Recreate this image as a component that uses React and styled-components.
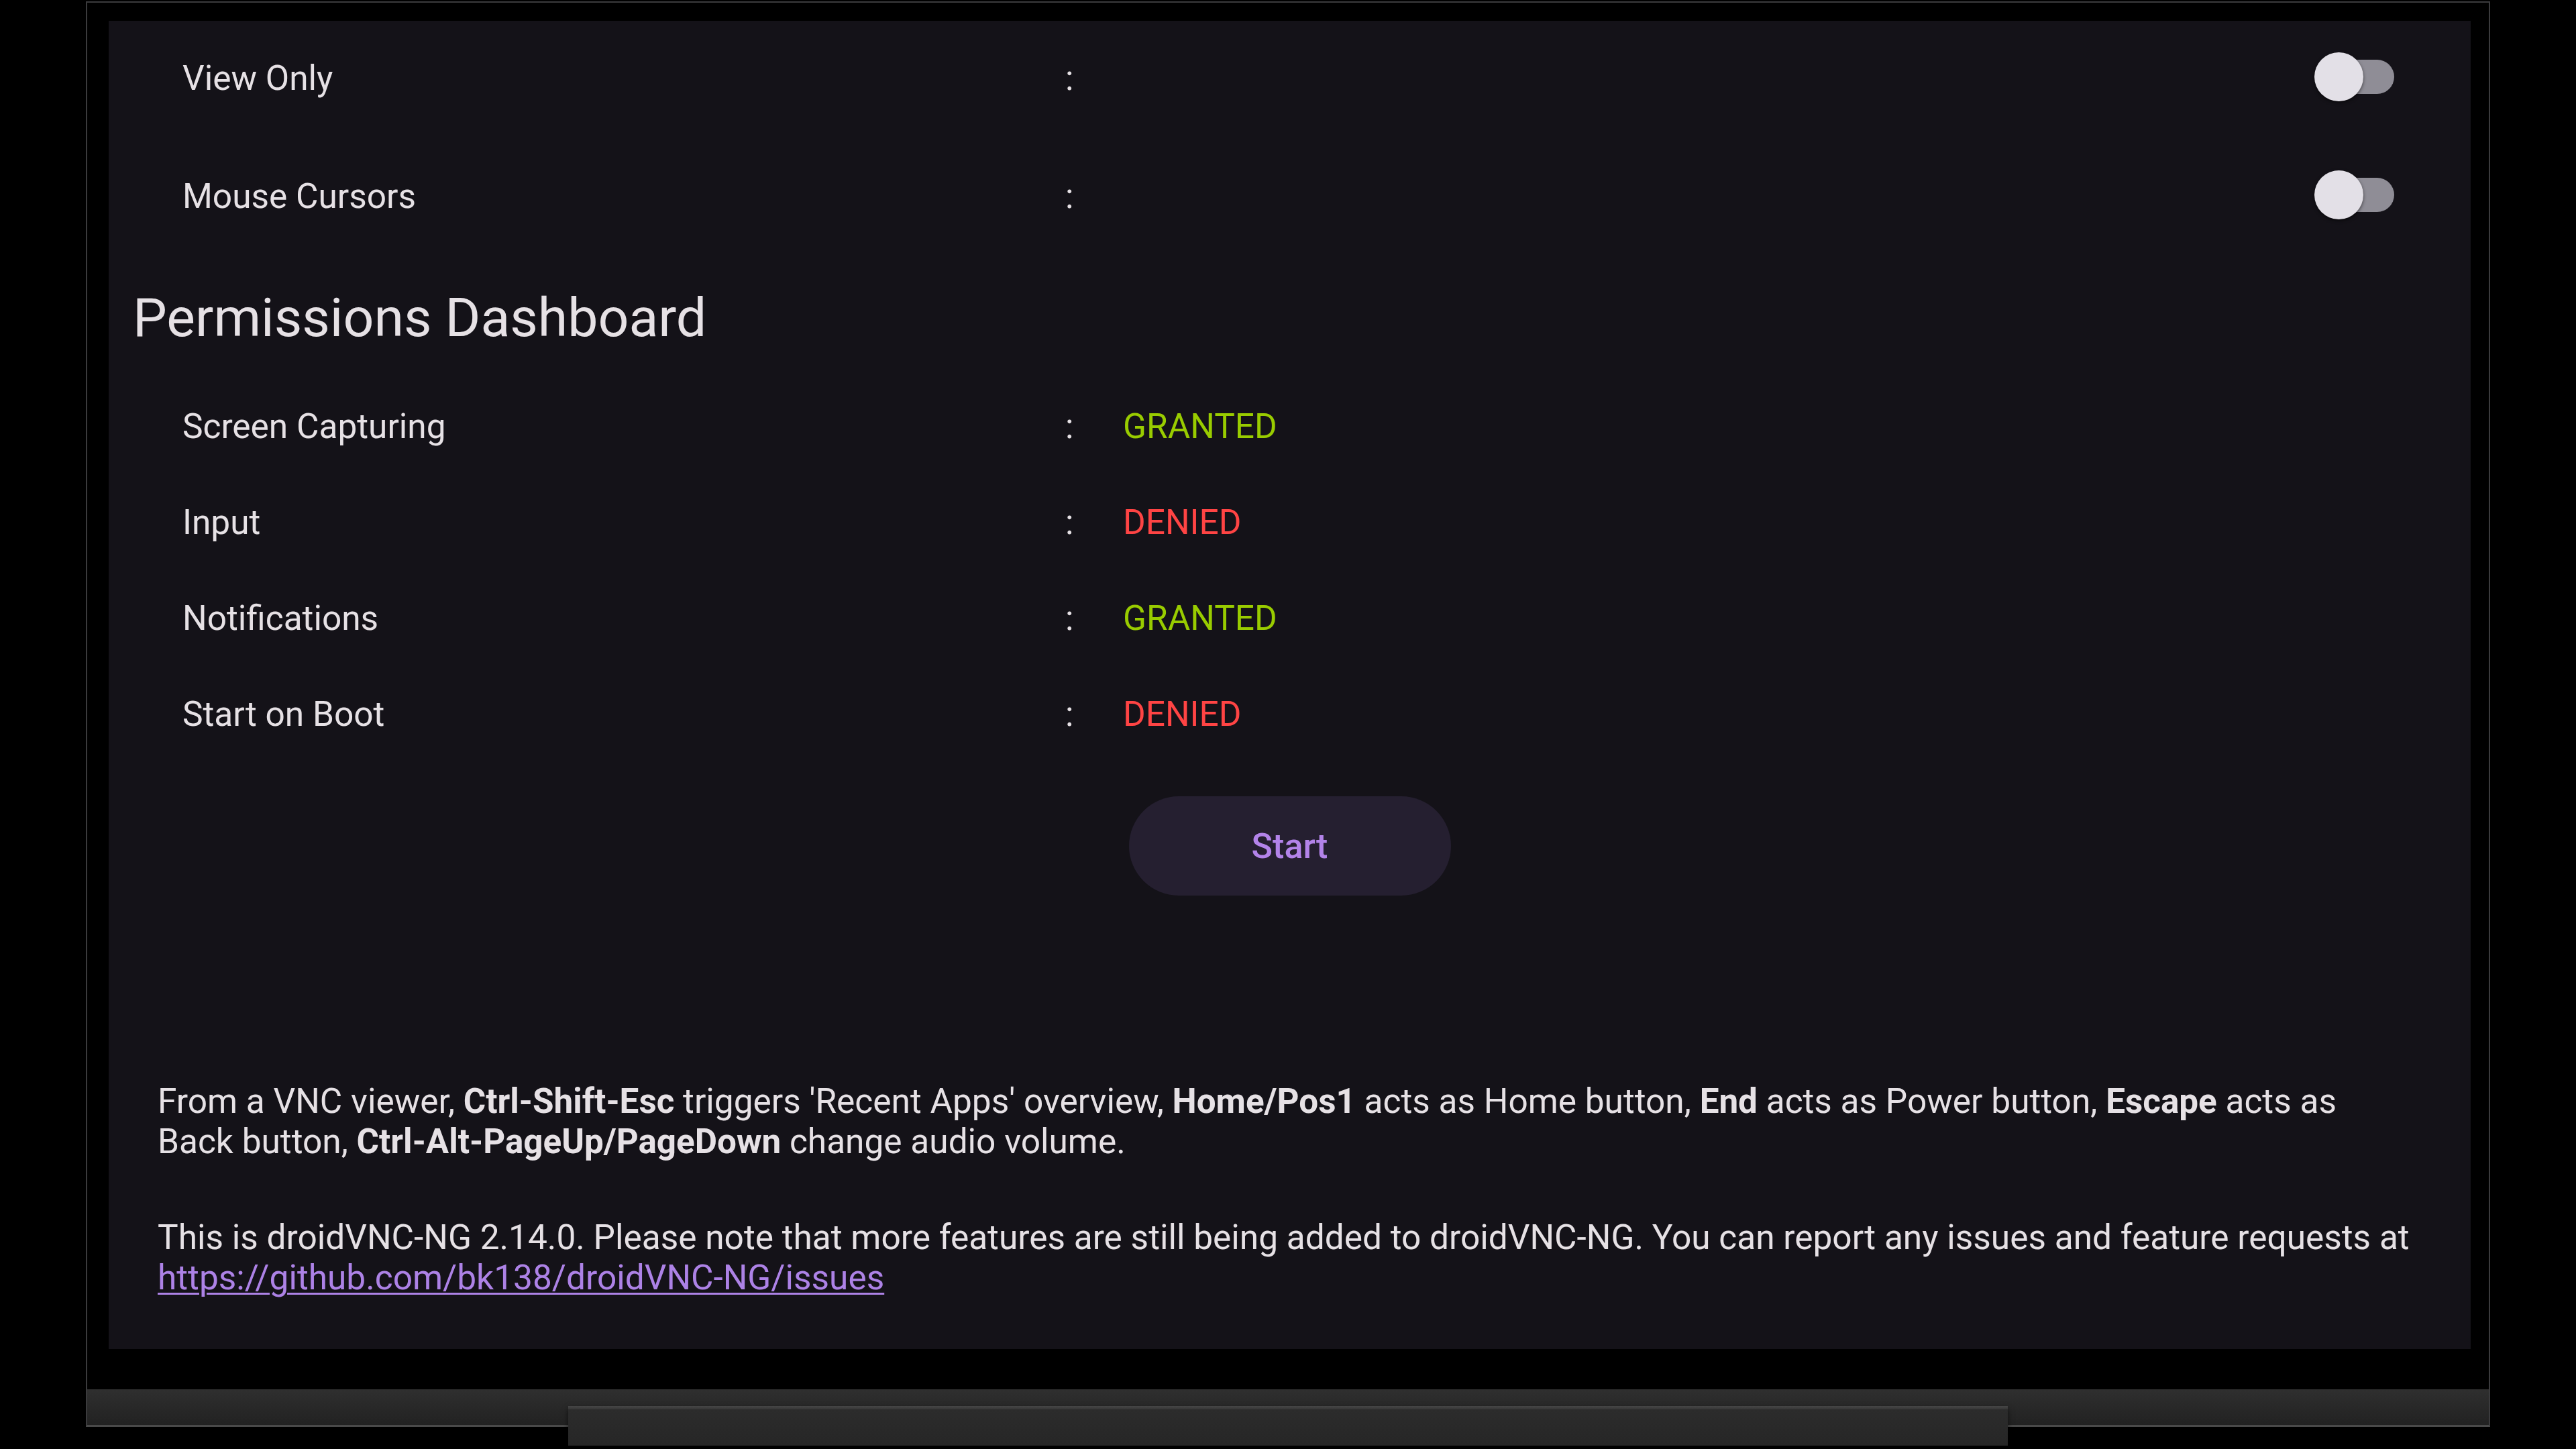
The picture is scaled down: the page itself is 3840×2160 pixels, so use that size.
import React from 'react';
import styled, { createGlobalStyle } from 'styled-components';

const GlobalStyle = createGlobalStyle`
  html, body {
    margin: 0;
    padding: 0;
    background: #000;
  }
  body {
    font-family: Roboto, "Noto Sans", "Liberation Sans", sans-serif;
    overflow: hidden;
  }
  * {
    box-sizing: border-box;
  }
`;

const Stage = styled.div`
  width: 3840px;
  height: 2160px;
  background: #000;
  padding-top: 2px;
  overflow: hidden;
`;

const Tv = styled.div`
  width: 3584px;
  margin-left: 128px;
  display: flex;
  flex-direction: column;
`;

const Frame = styled.div`
  border: 2px solid #3b3b3d;
  border-bottom: none;
  background: #000;
  padding: 27px 27px 60px 32px;
`;

const Chin = styled.div`
  height: 56px;
  background: linear-gradient(#2f2f2f, #272727 60%, #222222);
  border-left: 2px solid #3b3b3d;
  border-right: 2px solid #3b3b3d;
  border-bottom: 3px solid #4a4a4a;
`;

const Stand = styled.div`
  position: relative;
  width: 2146px;
  height: 59px;
  margin: -31px auto 0;
  background: linear-gradient(#454545 0, #3a3a3a 4px, #2c2c2c 5px, #262626);
  box-shadow: 0 4px 8px rgba(0, 0, 0, 0.6);
`;

const Screen = styled.div`
  width: 3521px;
  height: 1980px;
  background: #141218;
  color: #e6e1e5;
  display: flex;
  flex-direction: column;
  padding: 2px 36px 76px;
  font-size: 51.4px;
  line-height: 60px;
`;

const ToggleList = styled.div`
  display: flex;
  flex-direction: column;
  gap: 8px;
`;

const Row = styled.div`
  display: grid;
  grid-template-columns: 1316px 86px 1fr auto;
  align-items: center;
  height: ${(p) => p.$height}px;
  padding: 0 78px 0 74px;
`;

const Label = styled.span`
  white-space: nowrap;
`;

const Colon = styled.span``;

const Status = styled.span`
  color: ${(p) => (p.$ok ? '#99cc00' : '#ff4444')};
`;

const Switch = styled.div`
  position: relative;
  width: 119px;
  height: 73px;
  margin-bottom: 5px;
`;

const Track = styled.div`
  position: absolute;
  right: 0;
  top: 11px;
  width: 112px;
  height: 51px;
  border-radius: 26px;
  background: #8f8d96;
`;

const Thumb = styled.div`
  position: absolute;
  left: 0;
  top: 0;
  width: 73px;
  height: 73px;
  border-radius: 50%;
  background: #e3e0e7;
  box-shadow: 0 2px 5px rgba(0, 0, 0, 0.55);
`;

const Heading = styled.h2`
  margin: 50px 0 0;
  font-size: 80.6px;
  line-height: 94px;
  font-weight: 400;
`;

const PermList = styled.div`
  margin-top: 43px;
  display: flex;
  flex-direction: column;
`;

const StartButton = styled.button`
  align-self: center;
  margin-top: 51px;
  width: 480px;
  height: 148px;
  border: none;
  border-radius: 74px;
  background: #251f30;
  color: #b383e9;
  font-family: Roboto, "Noto Sans", sans-serif;
  font-size: 52px;
  font-weight: 500;
  cursor: pointer;
`;

const Footer = styled.div`
  margin-top: auto;
  padding: 0 42px 0 37px;
`;

const Para = styled.p`
  margin: 0;
  & + & {
    margin-top: 83px;
  }
`;

const Key = styled.b`
  font-size: 51.2px;
  font-weight: 700;
`;

const Link = styled.a`
  color: #ad82e6;
  text-decoration: underline;
  text-underline-offset: 5px;
  text-decoration-thickness: 3px;
`;

const Toggle = () => (
  <Switch>
    <Track />
    <Thumb />
  </Switch>
);

const toggles = ['View Only', 'Mouse Cursors'];

const permissions = [
  { name: 'Screen Capturing', ok: true },
  { name: 'Input', ok: false },
  { name: 'Notifications', ok: true },
  { name: 'Start on Boot', ok: false },
];

export default function App() {
  return (
    <Stage>
      <GlobalStyle />
      <Tv>
        <Frame>
          <Screen>
            <ToggleList>
              {toggles.map((t) => (
                <Row key={t} $height={168}>
                  <Label>{t}</Label>
                  <Colon>:</Colon>
                  <span />
                  <Toggle />
                </Row>
              ))}
            </ToggleList>

            <Heading>Permissions Dashboard</Heading>
            <PermList>
              {permissions.map((p) => (
                <Row key={p.name} $height={143}>
                  <Label>{p.name}</Label>
                  <Colon>:</Colon>
                  <Status $ok={p.ok}>{p.ok ? 'GRANTED' : 'DENIED'}</Status>
                  <span />
                </Row>
              ))}
            </PermList>

            <StartButton>Start</StartButton>

            <Footer>
              <Para>
                From a VNC viewer, <Key>Ctrl-Shift-Esc</Key> triggers 'Recent Apps' overview,{' '}
                <Key>Home/Pos1</Key> acts as Home button, <Key>End</Key> acts as Power button,{' '}
                <Key>Escape</Key> acts as Back button, <Key>Ctrl-Alt-PageUp/PageDown</Key> change audio volume.
              </Para>
              <Para>
                This is droidVNC-NG 2.14.0. Please note that more features are still being added to
                droidVNC-NG. You can report any issues and feature requests at{' '}
                <Link href="#">https://github.com/bk138/droidVNC-NG/issues</Link>
              </Para>
            </Footer>
          </Screen>
        </Frame>
        <Chin />
        <Stand />
      </Tv>
    </Stage>
  );
}
